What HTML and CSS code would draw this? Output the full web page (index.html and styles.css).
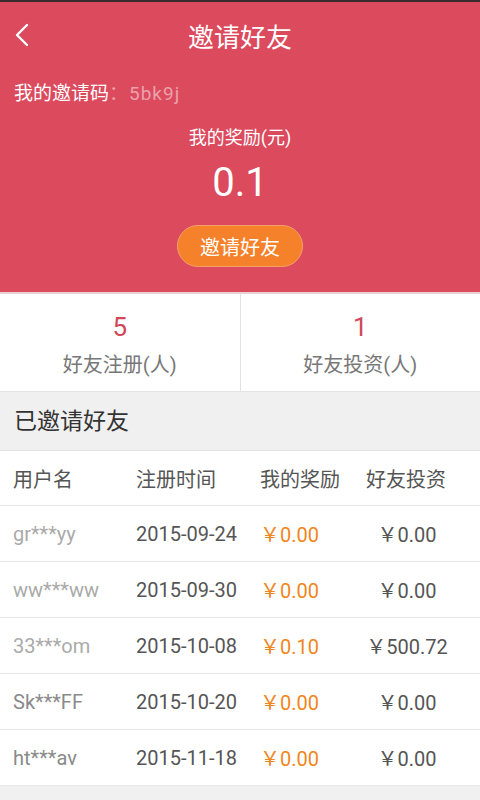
FILE: index.html
```html
<!DOCTYPE html>
<html lang="zh">
<head>
  <meta charset="UTF-8" />
  <meta name="viewport" content="width=device-width, initial-scale=1.0">
  <title>邀请好友</title>
  <link rel="stylesheet" href="styles.css">
</head>
<body>
  <div class="top">
    <div class="nav">
      <svg class="back" width="16" height="24" viewBox="0 0 16 24">
        <polyline points="13,2 3,12 13,22" fill="none" stroke="#fff" stroke-width="2.4" stroke-linecap="round" stroke-linejoin="round"/>
      </svg>
      <h1>邀请好友</h1>
    </div>
    <div class="code">我的邀请码<span class="code-val">：5bk9j</span></div>
    <div class="reward-label">我的奖励(元)</div>
    <div class="reward">0.1</div>
    <button class="invite">邀请好友</button>
  </div>

  <div class="stats">
    <div class="stat">
      <div class="num">5</div>
      <div class="label">好友注册(人)</div>
    </div>
    <div class="stat">
      <div class="num">1</div>
      <div class="label">好友投资(人)</div>
    </div>
  </div>

  <div class="section-title">已邀请好友</div>

  <div class="table">
    <div class="row head">
      <span>用户名</span>
      <span>注册时间</span>
      <span>我的奖励</span>
      <span class="c4">好友投资</span>
    </div>
    <div class="row">
      <span class="user faded">gr***yy</span>
      <span>2015-09-24</span>
      <span class="money">￥0.00</span>
      <span class="c4">￥0.00</span>
    </div>
    <div class="row">
      <span class="user faded">ww***ww</span>
      <span>2015-09-30</span>
      <span class="money">￥0.00</span>
      <span class="c4">￥0.00</span>
    </div>
    <div class="row">
      <span class="user faded">33***om</span>
      <span>2015-10-08</span>
      <span class="money">￥0.10</span>
      <span class="c4">￥500.72</span>
    </div>
    <div class="row">
      <span class="user">Sk***FF</span>
      <span>2015-10-20</span>
      <span class="money">￥0.00</span>
      <span class="c4">￥0.00</span>
    </div>
    <div class="row">
      <span class="user">ht***av</span>
      <span>2015-11-18</span>
      <span class="money">￥0.00</span>
      <span class="c4">￥0.00</span>
    </div>
  </div>
</body>
</html>
```

FILE: styles.css
```css
body {
  margin: 0;
  background: #f0f0f0;
  font-family: Roboto, "Noto Sans CJK SC", sans-serif;
  height: 800px;
  overflow: hidden;
}

.top {
  background: #dc4a5e;
  border-top: 2px solid #3a2a2e;
  color: #fff;
  height: 292px;
  box-sizing: border-box;
  display: flex;
  flex-direction: column;
  align-items: center;
}

.nav {
  width: 100%;
  height: 66px;
  display: flex;
  align-items: center;
  justify-content: center;
  position: relative;
}

.back {
  position: absolute;
  left: 14px;
  top: 21px;
}

h1 {
  margin: 0;
  font-size: 26px;
  font-weight: normal;
}

.code {
  align-self: flex-start;
  margin-left: 14px;
  margin-top: 14px;
  font-size: 19px;
  line-height: 24px;
}

.code-val {
  color: #eba1ab;
  letter-spacing: 1px;
}

.reward-label {
  margin-top: 20px;
  font-size: 18px;
  line-height: 24px;
}

.reward {
  margin-top: 10px;
  font-size: 40px;
  line-height: 46px;
}

.invite {
  margin-top: 19px;
  width: 126px;
  height: 42px;
  background: #f5812a;
  color: #fff;
  border: 1px solid #f7a06a;
  border-radius: 21px;
  font-family: inherit;
  font-size: 20px;
  padding: 0;
}

.stats {
  display: flex;
  background: #fff;
  border-top: 2px solid #e8d0d4;
  height: 97px;
}

.stat {
  flex: 1;
  display: flex;
  flex-direction: column;
  align-items: center;
  padding-top: 18px;
}

.stat + .stat {
  border-left: 1px solid #e2e2e2;
}

.num {
  color: #d0485a;
  font-size: 26px;
  line-height: 30px;
}

.label {
  color: #777;
  font-size: 20px;
  line-height: 26px;
  margin-top: 10px;
}

.section-title {
  height: 58px;
  line-height: 60px;
  padding-left: 14px;
  font-size: 23px;
  color: #333;
  border-top: 1px solid #e4e4e4;
  border-bottom: 1px solid #e0e0e0;
}

.table {
  background: #fff;
}

.row {
  display: grid;
  grid-template-columns: 123px 124px 100px 1fr;
  align-items: center;
  height: 55px;
  padding-left: 13px;
  border-bottom: 1px solid #e8e8e8;
  font-size: 20px;
  color: #555;
}

.row.head {
  height: 54px;
}

.user {
  color: #8a8a8a;
}

.user.faded {
  color: #aaa;
}

.money {
  color: #f0861e;
}

.c4 {
  text-align: center;
  padding-right: 26px;
}

.head .c4 {
  text-align: left;
  padding-left: 6px;
  padding-right: 0;
}
```
